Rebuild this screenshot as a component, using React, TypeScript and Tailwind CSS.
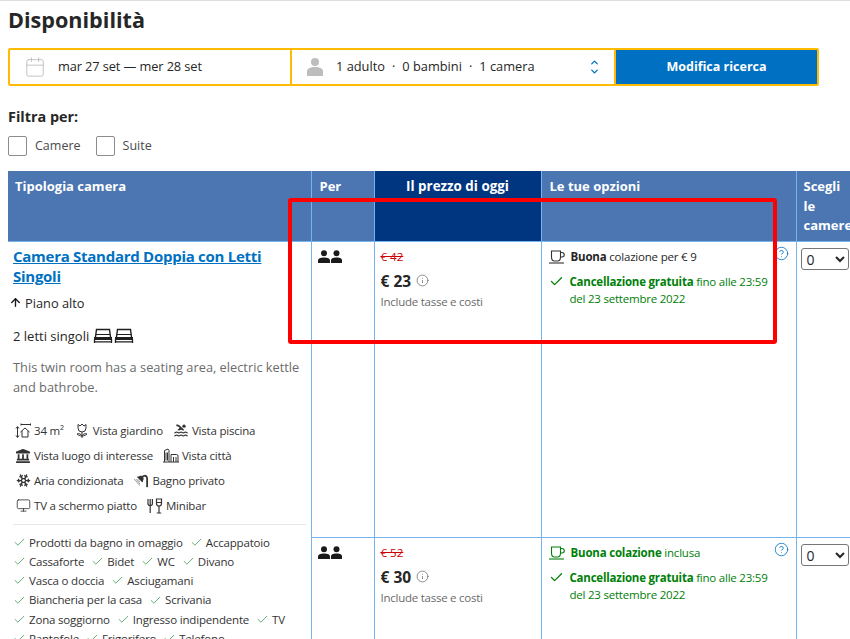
import { Calendar, ChevronDown, ChevronUp, CircleHelp, Info, Monitor, Snowflake, ArrowUp, Check } from "lucide-react"
import { FaLandmark, FaShower } from "react-icons/fa"
import { MdPool } from "react-icons/md"

function People() {
  return (
    <svg width="25" height="14" viewBox="0 0 25 14" fill="#1a1a1a">
      <circle cx="6" cy="3.2" r="3" />
      <path d="M0 13v-2.5C0 8.5 2 7.5 6 7.5s6 1 6 3V13z" />
      <circle cx="18.500" cy="3.2" r="3" />
      <path d="M13 13v-2.5c0-2 1.500-3 5.500-3s5.500 1 5.500 3V13z" />
    </svg>
  )
}

function Bed() {
  return (
    <svg width="20" height="16" viewBox="0 0 20 16" fill="none" stroke="#1f1f1f">
      <path d="M2.500 9L3.500 1.500h13L17.500 9" strokeWidth="1.400" />
      <path d="M3 6.500h14" strokeWidth="1" />
      <path d="M1 10.500h18" strokeWidth="3" />
      <path d="M1.500 15v-4M18.500 15v-4M1 13.800h18" strokeWidth="1.300" />
    </svg>
  )
}

function Cup({ color }: { color: string }) {
  return (
    <svg width="16" height="14" viewBox="0 0 16 14" fill="none" stroke={color} strokeWidth="1.100">
      <path d="M2.500 1h9v6c0 2.500-1.500 4-3 4h-3c-1.500 0-3-1.500-3-4z" />
      <path d="M11.500 2.500h1.500a1.700 1.700 0 0 1 0 4.500h-1.500" />
      <path d="M0 13h15" />
    </svg>
  )
}

function Size() {
  return (
    <svg width="16" height="15" viewBox="0 0 16 15" fill="none" stroke="#333" strokeWidth="1">
      <path d="M2.500 4v10M1 5.500l1.500-2 1.500 2M1 12.500l1.500 2 1.500-2" />
      <path d="M6 1.500h9.500M6 .5v2M15.500 .5v2" />
      <path d="M5.500 9l4.500-4 4.500 4M7 8v6h6V8" />
    </svg>
  )
}

function Tulip() {
  return (
    <svg width="16" height="16" viewBox="0 0 16 16" fill="none" stroke="#333" strokeWidth="1">
      <path d="M4 1.500L6 3l2-2 2 2 2-1.500V5a4 4 0 0 1-8 0z" />
      <path d="M8 9v6" />
      <path d="M8 13c-2 0-4-1-5-2 2-1 4 0 5 2zM8 13c2 0 4-1 5-2-2-1-4 0-5 2z" />
    </svg>
  )
}

function Buildings() {
  return (
    <svg width="16" height="15" viewBox="0 0 16 15" fill="none" stroke="#333" strokeWidth="1">
      <path d="M1.500 14V2.500L5 1l1 1.500V14M8 14V6.500h5.500a1.500 1.500 0 0 1 1.500 1.500v6M0 14h16" />
      <path d="M3 4.500v8M4.500 4.500v8M10.500 9v5M13 9v5" />
    </svg>
  )
}

function ForkGlass() {
  return (
    <svg width="16" height="16" viewBox="0 0 16 16" fill="none" stroke="#333" strokeWidth="1.200">
      <path d="M1 1v4.500a2.200 2.200 0 0 0 4.400 0V1M3.200 1v14" />
      <path d="M9.500 1h5v4.500a2.500 2.500 0 0 1-5 0zM12 8v7M9.800 15h4.400M9.500 4.500h5" />
    </svg>
  )
}

function Amenity({ icon, label }: { icon: React.ReactNode; label: string }) {
  return (
    <span className="flex items-center gap-[3px]">
      <span className="flex w-[16px] justify-center">{icon}</span>
      {label}
    </span>
  )
}

function Fac({ label }: { label: string }) {
  return (
    <span className="flex items-center gap-[3px]">
      <Check size={13} color="#3f9c5a" strokeWidth={1.500} />
      {label}
    </span>
  )
}

function PriceCell({ oldPrice, price }: { oldPrice: string; price: string }) {
  return (
    <td className="border-r border-[#76b4ee] px-[6px] pt-[6px] align-top">
      <div className="text-[11.500px] leading-[18px] text-[#cc0000] line-through">{oldPrice}</div>
      <div className="mt-[5px] flex items-center gap-[5px] text-[15.500px] font-bold leading-[20px] text-[#262626]">
        {price}
        <Info size={13} color="#5f5f5f" strokeWidth={1.300} />
      </div>
      <div className="mt-[3px] text-[11.500px] leading-[16px] tracking-[-0.25px] text-[#6b6b6b]">Include tasse e costi</div>
    </td>
  )
}

function OptionsCell({ children, icon }: { children: React.ReactNode; icon: React.ReactNode }) {
  return (
    <td className="border-r border-[#76b4ee] px-[7px] pt-[6px] align-top">
      <div className="flex items-start justify-between">
        <div className="flex h-[18px] items-center gap-[6px] text-[11.500px] tracking-[-0.2px] text-[#262626]">
          {icon}
          {children}
        </div>
        <CircleHelp size={15} color="#0071c2" strokeWidth={1.300} className="-mt-[2px]" />
      </div>
      <div className="mt-[7px] flex gap-[6px] text-[11.500px] leading-[17px] tracking-[-0.22px] text-[#008009]">
        <Check size={15} strokeWidth={2} className="mt-[1px] shrink-0" />
        <div>
          <b>Cancellazione gratuita</b> fino alle 23:59
          <br />
          del 23 settembre 2022
        </div>
      </div>
    </td>
  )
}

function QtyCell() {
  return (
    <td className="px-[4px] pt-[5px] align-top">
      <select className="h-[22px] w-[48px] rounded-[3px] border border-[#767676] bg-white pl-[1px] text-[14px] text-[#262626]">
        <option>0</option>
      </select>
    </td>
  )
}

export default function App() {
  return (
    <div className="relative h-[639px] w-[850px] overflow-hidden border-t border-[#dddddd] bg-white font-['Open_Sans',sans-serif] text-[#262626]">
      <div className="px-[8px]">
        <h2 className="mt-[4px] text-[21.600px] font-bold leading-[30px]">Disponibilità</h2>

        <div className="mt-[13px] flex h-[38px] w-[811px] overflow-hidden rounded-[2px] border-2 border-[#febb02] text-[12.800px]">
          <div className="flex w-[282px] items-center border-r-2 border-[#febb02] pl-[14px]">
            <Calendar size={22} color="#bdbdbd" strokeWidth={1} />
            <span className="ml-[12px] tracking-[-0.1px]">mar 27 set — mer 28 set</span>
          </div>
          <div className="flex w-[324px] items-center border-r-2 border-[#febb02] pl-[15px]">
            <svg width="16" height="18" viewBox="0 0 16 18" fill="#bdbdbd">
              <circle cx="8" cy="4" r="4" />
              <path d="M0 18v-5c0-2 3-4 8-4s8 2 8 4v5z" />
            </svg>
            <span className="ml-[13px]">
              1 adulto<span className="mx-[7px]">·</span>0 bambini<span className="mx-[7px]">·</span>1 camera
            </span>
            <span className="ml-auto mr-[14px] flex flex-col text-[#0071c2]">
              <ChevronUp size={11} strokeWidth={3} className="-mb-[2px]" />
              <ChevronDown size={11} strokeWidth={3} />
            </span>
          </div>
          <button className="flex-1 bg-[#0071c2] text-[12.500px] font-bold text-white">Modifica ricerca</button>
        </div>

        <div className="mt-[21px] text-[14.400px] font-bold leading-[20px]">Filtra per:</div>
        <div className="mt-[9px] flex items-center text-[12.500px] text-[#4a4a4a]">
          <span className="h-[20px] w-[19px] rounded-[2px] border border-[#8c8c8c]" />
          <span className="ml-[8px]">Camere</span>
          <span className="ml-[15px] h-[20px] w-[19px] rounded-[2px] border border-[#8c8c8c]" />
          <span className="ml-[8px]">Suite</span>
        </div>
      </div>

      <table className="ml-[8px] mt-[15px] w-[890px] table-fixed border-collapse">
        <colgroup>
          <col className="w-[303px]" />
          <col className="w-[63px]" />
          <col className="w-[167px]" />
          <col className="w-[255px]" />
          <col className="w-[102px]" />
        </colgroup>
        <thead>
          <tr className="h-[70px] border-b border-[#76b4ee] align-top text-[13px] font-bold leading-[19.500px] text-white">
            <th className="border-r border-[#76b4ee] bg-[#4c76b2] px-[7px] pt-[6px] text-left">Tipologia camera</th>
            <th className="border-r border-[#76b4ee] bg-[#4c76b2] px-[8px] pt-[6px] text-left">Per</th>
            <th className="border-r border-[#76b4ee] bg-[#003580] pt-[6px] text-center text-[13.400px]">Il prezzo di oggi</th>
            <th className="border-r border-[#76b4ee] bg-[#4c76b2] px-[8px] pt-[6px] text-left">Le tue opzioni</th>
            <th className="bg-[#4c76b2] px-[7px] pt-[6px] text-left">
              Scegli
              <br />
              le
              <br />
              camere
            </th>
          </tr>
        </thead>
        <tbody>
          <tr className="h-[296px] border-b border-[#76b4ee]">
            <td rowSpan={2} className="border-r border-[#76b4ee] px-[5px] pt-[4px] align-top">
              <a className="block text-[15px] font-bold leading-[20px] tracking-[-0.27px] text-[#0071c2] underline">
                Camera Standard Doppia con Letti Singoli
              </a>
              <div className="mt-[7px] flex items-center gap-[3px] text-[12.800px] leading-[20px]">
                <ArrowUp size={13} color="#1a1a1a" strokeWidth={2.500} className="-ml-[4px]" />
                Piano alto
              </div>
              <div className="mt-[13px] flex items-center gap-[4px] text-[13px] leading-[20px]">
                2 letti singoli
                <span className="flex gap-[1px]">
                  <Bed />
                  <Bed />
                </span>
              </div>
              <p className="mt-[11px] text-[12.800px] leading-[20px] text-[#6b6b6b]">
                This twin room has a seating area, electric kettle and bathrobe.
              </p>
              <div className="mt-[25px] flex flex-col gap-[7px] border-b border-[#e6e6e6] pb-[9px] pl-[2px] text-[11.500px] leading-[18px] tracking-[-0.2px] text-[#333333]">
                <div className="flex gap-[10px]">
                  <Amenity icon={<Size />} label="34 m²" />
                  <Amenity icon={<Tulip />} label="Vista giardino" />
                  <Amenity icon={<MdPool size={17} color="#333" />} label="Vista piscina" />
                </div>
                <div className="flex gap-[10px]">
                  <Amenity icon={<FaLandmark size={14} color="#333" />} label="Vista luogo di interesse" />
                  <Amenity icon={<Buildings />} label="Vista città" />
                </div>
                <div className="flex gap-[10px]">
                  <Amenity icon={<Snowflake size={15} strokeWidth={2} color="#333" />} label="Aria condizionata" />
                  <Amenity icon={<FaShower size={14} color="#333" className="-scale-x-100" />} label="Bagno privato" />
                </div>
                <div className="flex gap-[10px]">
                  <Amenity icon={<Monitor size={15} strokeWidth={1.300} />} label="TV a schermo piatto" />
                  <Amenity icon={<ForkGlass />} label="Minibar" />
                </div>
              </div>
              <div className="mt-[8px] flex flex-col text-[11.500px] leading-[19.300px] tracking-[-0.18px] text-[#333333]">
                <div className="flex gap-[7px]">
                  <Fac label="Prodotti da bagno in omaggio" />
                  <Fac label="Accappatoio" />
                </div>
                <div className="flex gap-[7px]">
                  <Fac label="Cassaforte" />
                  <Fac label="Bidet" />
                  <Fac label="WC" />
                  <Fac label="Divano" />
                </div>
                <div className="flex gap-[7px]">
                  <Fac label="Vasca o doccia" />
                  <Fac label="Asciugamani" />
                </div>
                <div className="flex gap-[7px]">
                  <Fac label="Biancheria per la casa" />
                  <Fac label="Scrivania" />
                </div>
                <div className="flex gap-[7px]">
                  <Fac label="Zona soggiorno" />
                  <Fac label="Ingresso indipendente" />
                  <Fac label="TV" />
                </div>
                <div className="flex gap-[7px]">
                  <Fac label="Pantofole" />
                  <Fac label="Frigorifero" />
                  <Fac label="Telefono" />
                </div>
              </div>
            </td>
            <td className="border-r border-[#76b4ee] px-[6px] pt-[8px] align-top">
              <People />
            </td>
            <PriceCell oldPrice="€ 42" price="€ 23" />
            <OptionsCell icon={<Cup color="#333333" />}>
              <span>
                <b>Buona</b> colazione per € 9
              </span>
            </OptionsCell>
            <QtyCell />
          </tr>
          <tr className="h-[200px]">
            <td className="border-r border-[#76b4ee] px-[6px] pt-[8px] align-top">
              <People />
            </td>
            <PriceCell oldPrice="€ 52" price="€ 30" />
            <OptionsCell icon={<Cup color="#008009" />}>
              <span className="text-[#008009]">
                <b>Buona colazione</b> inclusa
              </span>
            </OptionsCell>
            <QtyCell />
          </tr>
        </tbody>
      </table>

      {/* annotation on top of the screenshot */}
      <div className="absolute left-[288px] top-[197px] h-[146px] w-[489px] rounded-[3px] border-[4px] border-[#ff0000]" />
    </div>
  )
}
